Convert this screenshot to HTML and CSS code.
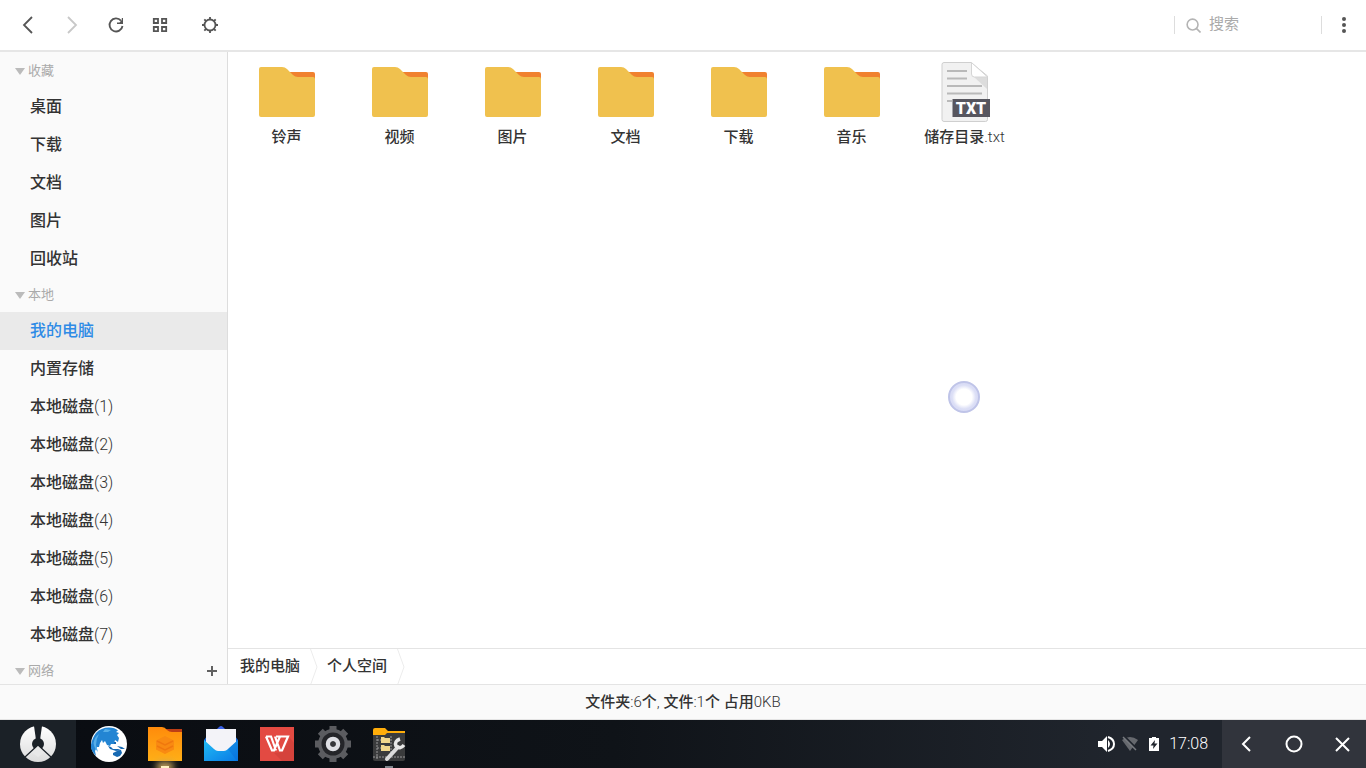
FILE: index.html
```html
<!DOCTYPE html>
<html lang="zh-CN">
<head>
<meta charset="utf-8">
<title>文件管理器</title>
<link rel="stylesheet" href="styles.css">
</head>
<body>
<svg class="defs" aria-hidden="true">
  <symbol id="folder" viewBox="0 0 56 50">
    <path fill="#f0812f" d="M28 5h26q2 0 2 2v8H28z"/>
    <path fill="#f0c14e" d="M2 0h21q3 0 5 2l6 6q2 2 5 2h15q2 0 2 2v36q0 2-2 2H2q-2 0-2-2V2q0-2 2-2z"/>
  </symbol>
</svg>
<header class="toolbar">
  <div class="tools">
    <button class="tool" aria-label="后退"><svg viewBox="0 0 20 20"><path d="m14 2-8 8 8 8"/></svg></button>
    <button class="tool" aria-label="前进" disabled><svg viewBox="0 0 20 20"><path d="m6 2 8 8-8 8"/></svg></button>
    <button class="tool" aria-label="刷新"><svg viewBox="0 0 20 20"><path d="M15 5.700A6.500 6.500 0 1 0 16.500 11"/><path fill="#555" stroke="none" d="M17 3v6h-6V7.500h2.500L15.800 5V3z"/></svg></button>
    <button class="tool" aria-label="视图"><svg viewBox="0 0 20 20"><path d="M3.800 3.800h4.200v4.200H3.800zM12 3.800h4.200v4.200H12zM3.800 12h4.200v4.200H3.800zM12 12h4.200v4.200H12z"/></svg></button>
    <button class="tool settings" aria-label="设置"><svg viewBox="0 0 20 20"><circle cx="10" cy="10" r="5.500"/><path d="M10 2v2.500M10 15.500V18M2 10h2.500M15.500 10H18M4.300 4.300l1.700 1.700M14 14l1.700 1.700M15.700 4.300 14 6M6 14l-1.700 1.700"/></svg></button>
  </div>
  <label class="search">
    <svg viewBox="0 0 16 16"><circle cx="7" cy="7" r="5.800"/><path d="m11 11 4.500 4.500"/></svg>
    <input type="text" placeholder="搜索" aria-label="搜索">
  </label>
  <button class="more" aria-label="更多"><svg viewBox="0 0 20 20"><circle cx="10" cy="4" r="2"/><circle cx="10" cy="10" r="2"/><circle cx="10" cy="16" r="2"/></svg></button>
</header>
<div class="body">
  <nav class="sidebar">
    <h2 class="group">收藏</h2>
    <a class="place" href="#">桌面</a>
    <a class="place" href="#">下载</a>
    <a class="place" href="#">文档</a>
    <a class="place" href="#">图片</a>
    <a class="place" href="#">回收站</a>
    <h2 class="group">本地</h2>
    <a class="place current" href="#">我的电脑</a>
    <a class="place" href="#">内置存储</a>
    <a class="place" href="#">本地磁盘<span class="thin">(1)</span></a>
    <a class="place" href="#">本地磁盘<span class="thin">(2)</span></a>
    <a class="place" href="#">本地磁盘<span class="thin">(3)</span></a>
    <a class="place" href="#">本地磁盘<span class="thin">(4)</span></a>
    <a class="place" href="#">本地磁盘<span class="thin">(5)</span></a>
    <a class="place" href="#">本地磁盘<span class="thin">(6)</span></a>
    <a class="place" href="#">本地磁盘<span class="thin">(7)</span></a>
    <div class="grouprow"><h2 class="group">网络</h2><button class="add" aria-label="添加"><svg viewBox="0 0 12 12"><path d="M6 1v10M1 6h10"/></svg></button></div>
  </nav>
  <div class="content">
    <main class="files">
      <a class="file" href="#"><svg class="folder"><use href="#folder"/></svg><span>铃声</span></a>
      <a class="file" href="#"><svg class="folder"><use href="#folder"/></svg><span>视频</span></a>
      <a class="file" href="#"><svg class="folder"><use href="#folder"/></svg><span>图片</span></a>
      <a class="file" href="#"><svg class="folder"><use href="#folder"/></svg><span>文档</span></a>
      <a class="file" href="#"><svg class="folder"><use href="#folder"/></svg><span>下载</span></a>
      <a class="file" href="#"><svg class="folder"><use href="#folder"/></svg><span>音乐</span></a>
      <a class="file" href="#">
        <svg class="doc" viewBox="0 0 50 60">
          <path fill="#f1f1f1" stroke="#cfcfcf" d="M4 .500h27L47.500 14v43.500q0 2-2 2H4q-2 0-2-2v-55q0-2 2-2z"/>
          <path fill="#dcdcdc" d="M34 15h13v12z"/>
          <path fill="#fff" stroke="#d5d5d5" d="M31.500.500 47.500 15h-13q-3 0-3-3z"/>
          <path stroke="#b9b9b9" stroke-width="2" d="M7 9h20M7 16.500h20M7 24h35M7 31.500h35M7 39h5"/>
          <path fill="#57565f" d="M12.500 37H50v18H12.500z"/>
          <text x="31" y="52" text-anchor="middle" class="doctype">TXT</text>
        </svg><span>储存目录<span class="thin">.txt</span></span></a>
    </main>
    <nav class="crumbs">
      <a href="#">我的电脑</a><svg viewBox="0 0 8 36"><path d="M.500 0 7 18 .500 36"/></svg>
      <a href="#">个人空间</a><svg viewBox="0 0 8 36"><path d="M.500 0 7 18 .500 36"/></svg>
    </nav>
  </div>
</div>
<footer class="status">文件夹<span class="thin">:6</span>个<span class="thin">, </span>文件<span class="thin">:1</span>个 占用<span class="thin">0KB</span></footer>
<div class="taskbar">
  <button class="start" aria-label="开始"><svg viewBox="0 0 36 36">
    <defs><linearGradient id="silver" x2="0" y2="1"><stop stop-color="#fff"/><stop offset="1" stop-color="#dcdcdc"/></linearGradient></defs>
    <circle cx="18" cy="18" r="18" fill="url(#silver)"/>
    <path fill="#1b2127" d="M14 0h8l-2 14h-4z"/><circle cx="18" cy="18" r="6" fill="#1b2127"/>
    <path fill="#e8e8e8" d="m18 19 7 7-7 5-7-5z"/><path stroke="#1b2127" stroke-width="1.200" d="m18 19 13 12M18 19 5 31"/>
  </svg></button>
  <div class="apps">
    <button class="app" aria-label="浏览器"><svg viewBox="0 0 36 36"><circle cx="18" cy="18" r="18" fill="#fff"/>
      <path fill="#2385d3" d="M5 7Q10 1.500 18 1.500q6 0 9 3l-2 1.500 3 1-2 2 2 3-1 4-3-2-1 4-3 0-1 2-3-1-2-4-2 2-1-3-2 3-1 4-2 0-2 4 1 5q-4-4-5.500-9Q1 12 5 7z"/>
      <path fill="#56aee8" d="M2.500 17q1-6 5.500-9-3 5-3 11l2 7q-4-4-4.500-9zM14 3l6 1-3 2-5 0z"/>
      <path fill="#1769b2" d="m17 20 3 1 2 2 5 0 3 1-5 1-6-2zM23 16h2v2h-2zM26 20l5 1 3 2-4 0zM22 27l4-2 4-1 1 3-2 3-3 1-4-2z"/></svg></button>
    <button class="app active" aria-label="文件管理"><svg viewBox="0 0 36 36">
      <defs><linearGradient id="orange" x2="0" y2="1"><stop stop-color="#ff8b0b"/><stop offset="1" stop-color="#ffaf17"/></linearGradient></defs>
      <path fill="#bd3e16" d="M16 3h19v12H16z"/><path fill="url(#orange)" d="M1 1h14q3 0 5 3 2 2 5 2h10v29H1z"/>
      <path fill="#f98a12" d="m9 14.500 9-4.500 9 4.500v9L18 28l-9-4.500z"/><path fill="none" stroke="#f0780e" stroke-width="1.500" d="m10 15 8 4 8-4M10 20l8 4 8-4"/></svg></button>
    <button class="app" aria-label="邮件"><svg viewBox="0 0 36 36">
      <defs><linearGradient id="blue" x2="1" y2="1"><stop stop-color="#22bdf5"/><stop offset="1" stop-color="#0879e5"/></linearGradient></defs>
      <path fill="#3a62e8" d="m14 3 2-2q2-2 4 0l2 2z"/><path fill="#1565d8" d="M1 14 4 10h28l3 4v8H1z"/><path fill="#f3f3f8" d="M3 3h30v17l-7 6H10l-7-6z"/>
      <path fill="url(#blue)" d="m1 14 10 9q2 2 4 2h6q2 0 4-2l10-9v21H1z"/><path fill="#0869d6" d="M25 23 35 14v21h-1z" opacity=".4"/></svg></button>
    <button class="app" aria-label="文字处理"><svg viewBox="0 0 36 36"><path fill="#e34a42" d="M1 1h34v34H1z"/><path fill="#c33b35" d="m15 27 9-1 7-14 4 5v18H23z" opacity=".45"/>
      <path fill="none" stroke="#fff" stroke-width="2.200" d="M7 10.500h5l5 14M7 10.500l6 14h2l6-14M17 10.500h12l-6 14h-2l-5-14"/></svg></button>
    <button class="app" aria-label="系统设置"><svg viewBox="0 0 36 36"><circle cx="18" cy="18" r="15" fill="#5b5c60"/>
      <path stroke="#5b5c60" stroke-width="7" d="M18 0v36M0 18h36M5.300 5.300l25.400 25.400M30.700 5.300 5.300 30.700"/>
      <circle cx="18" cy="18" r="11.500" fill="#242529"/><circle cx="18" cy="18" r="5" fill="none" stroke="#dedfe4" stroke-width="4.500"/><circle cx="18" cy="18" r="2.500" fill="#35363a"/></svg></button>
    <button class="app open" aria-label="文件工具"><svg viewBox="0 0 36 36"><path fill="#3a3b3c" d="M2 5h32v28q0 2-2 2H4q-2 0-2-2z"/><path fill="#ffad0a" d="M2 4q0-2 2-2h10l3 3h17v2H16l-2 2H2z"/>
      <path fill="none" stroke="#999" d="M6 10v24M6 14h6M6 22h6M2 31h32M20 10v21" stroke-dasharray="2 1"/><path fill="#f1d78c" d="M10 11h3l1 1h5v5h-9zM10 19h3l1 1h5v5h-9z"/>
      <path fill="none" stroke="#dcdcdc" stroke-width="4" stroke-linecap="round" d="m16 33 11-12"/><path fill="none" stroke="#e8e8e8" stroke-width="3.500" d="M29 13q-6 2-4 7 4 4 8-1"/></svg></button>
  </div>
  <div class="tray">
    <svg viewBox="0 0 18 18"><path fill="#fff" d="M1 6h4l5-5v16l-5-5H1z"/><path fill="none" stroke="#fff" stroke-width="2" d="M11 2q6 2 6 7t-6 7"/><path fill="#fff" d="M11 5q4 4 0 8z"/></svg>
    <svg viewBox="0 0 18 18"><path fill="#66696e" d="M1 5q8-6 16 0L9 16z"/><path stroke="#20252d" stroke-width="2" d="m3 1 13 13"/><path stroke="#777a7f" stroke-width="1.500" d="m2 2 13 13"/></svg>
    <svg class="battery" viewBox="0 0 12 16"><path fill="#fff" d="M4 1h4v1h3v13H1V2h3z"/><path fill="#20252d" d="M7 4 2.500 9.500H5.500L5 13l4.500-5.500h-3z"/></svg>
    <time>17:08</time>
  </div>
  <div class="keys">
    <button aria-label="返回"><svg viewBox="0 0 20 20"><path d="m14 3-7 7 7 7"/></svg></button>
    <button aria-label="主页"><svg viewBox="0 0 20 20"><circle cx="10" cy="10" r="7.500"/></svg></button>
    <button aria-label="关闭"><svg viewBox="0 0 20 20"><path d="m4 4 13 13M17 4 4 17"/></svg></button>
  </div>
</div>
<div class="pointer"></div>
</body>
</html>
```
FILE: styles.css
```css
* { box-sizing: border-box; }
body {
  margin: 0;
  height: 100vh;
  display: flex;
  flex-direction: column;
  overflow: hidden;
  background: #fff;
  color: #333;
  font: 500 15px/20px Roboto, "Noto Sans CJK SC", sans-serif;
}
button { border: 0; padding: 0; background: none; font: inherit; color: inherit; display: flex; align-items: center; justify-content: center; }
a { color: inherit; text-decoration: none; }
svg { display: block; flex: none; }
.defs { position: absolute; width: 0; height: 0; }
.thin { font-weight: 300; white-space: pre; }

.toolbar { flex: none; height: 52px; display: flex; align-items: center; border-bottom: 2px solid #e6e6e6; }
.tools { flex: 1; display: flex; padding-left: 6px; }
.tool { width: 44px; height: 44px; }
.tool svg { width: 20px; height: 20px; fill: none; stroke: #555; stroke-width: 1.8; }
.tool:disabled svg { stroke: #c8c8c8; }
.settings { margin-left: 6px; }
.search { width: 148px; height: 18px; display: flex; align-items: center; gap: 8px; padding-left: 11px; border: solid #ddd; border-width: 0 1px; }
.search svg { width: 15px; height: 15px; fill: none; stroke: #b4b4b4; stroke-width: 1.7; }
.search input { flex: 1; min-width: 0; height: 20px; border: 0; padding: 0 0 2px; outline: 0; background: none; font: inherit; font-weight: 400; color: #333; }
.search input::placeholder { color: #aaa; opacity: 1; }
.more { width: 44px; height: 44px; }
.more svg { width: 20px; height: 20px; fill: #555; }

.body { flex: 1; min-height: 0; display: flex; }
.sidebar { flex: none; width: 228px; padding-top: 2px; overflow: hidden; background: #fafafa; border-right: 1px solid #ddd; }
.group { margin: 0; height: 34px; display: flex; align-items: center; gap: 3px; padding-left: 15px; font-size: 13px; font-weight: 400; color: #aaa; }
.group::before { content: ""; border: solid transparent; border-width: 7px 5px 0; border-top-color: #bbb; }
.grouprow { display: flex; justify-content: space-between; }
.add { width: 30px; height: 34px; }
.add svg { width: 12px; height: 12px; stroke: #606060; stroke-width: 2; }
.place { height: 38px; display: flex; align-items: center; padding-left: 30px; font-size: 16px; }
.current { background: #eaeaea; color: #2e8be6; }

.content { flex: 1; min-width: 0; display: flex; flex-direction: column; }
.files { flex: 1; display: flex; flex-wrap: wrap; align-content: flex-start; padding: 10px 0 0 2px; }
.file { width: 113px; display: flex; flex-direction: column; align-items: center; gap: 5px; }
.folder { width: 56px; height: 50px; margin: 5px 0; }
.doc { width: 50px; height: 60px; }
.doctype { font: 900 16px Roboto, sans-serif; fill: #fff; }
.crumbs { flex: none; height: 36px; display: flex; align-items: center; border-top: 1px solid #e4e4e4; }
.crumbs a { padding: 0 10px 2px 12px; }
.crumbs svg { width: 8px; height: 36px; margin-right: -3px; fill: none; stroke: #ececec; }
.status { flex: none; height: 36px; display: flex; align-items: center; justify-content: center; background: #fafafa; border: solid #e4e4e4; border-width: 1px 0; white-space: pre; }

.taskbar { flex: none; height: 48px; display: flex; background: linear-gradient(90deg, #090c11, #0f1318 45%, #20252d 82%); color: #fff; }
.start { width: 76px; background: #1b2127; }
.start svg { width: 36px; height: 36px; }
.apps { flex: 1; display: flex; gap: 20px; padding-left: 15px; }
.app { position: relative; width: 36px; }
.app svg { width: 36px; height: 36px; }
.active::after, .open::after { content: ""; position: absolute; bottom: 0; left: 14px; width: 8px; height: 2px; background: #7e858c; }
.active::after { background: #fff3c0; box-shadow: 0 0 7px 4px #c6a45f; }
.tray { display: flex; align-items: center; gap: 6px; padding-right: 14px; font-size: 16px; font-weight: 300; }
.tray svg { width: 18px; height: 18px; }
.tray .battery { width: 12px; height: 16px; margin: 0 3px; }
.keys { display: flex; background: #31343c; }
.keys button { width: 48px; }
.keys svg { width: 20px; height: 20px; fill: none; stroke: #fff; stroke-width: 2; }

.pointer { position: absolute; left: 948px; top: 381px; width: 32px; height: 32px; border-radius: 50%; border: 2px solid #bfc4e8; background: radial-gradient(circle, #fff 40%, #dcdff6 60%, #cfd3f2); }
```
